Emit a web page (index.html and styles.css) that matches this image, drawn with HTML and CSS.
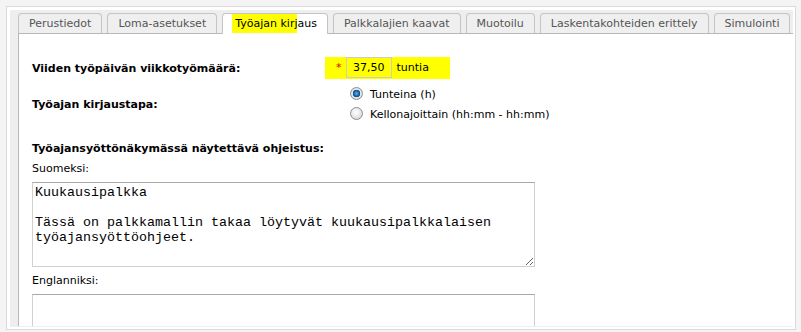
FILE: index.html
```html
<!DOCTYPE html>
<html lang="fi">
<head>
    <meta charset="UTF-8">
    <title>Palkkamalli - Työajan kirjaus</title>
    <link rel="stylesheet" href="styles.css">
</head>
<body>

<div class="frame">
    <div class="tabs">
        <ul class="tab-nav">
            <li>Perustiedot</li>
            <li>Loma-asetukset</li>
            <li class="active"><span class="mark">Työajan kirj</span>aus</li>
            <li>Palkkalajien kaavat</li>
            <li>Muotoilu</li>
            <li>Laskentakohteiden erittely</li>
            <li>Simulointi</li>
        </ul>

        <div class="panel">
            <div class="row row-hours">
                <label class="field-label" for="hours">Viiden työpäivän viikkotyömäärä:</label>
                <div class="field">
                    <span class="field-hl">
                        <span class="req">*</span>
                        <input type="text" id="hours" class="hours" value="37,50">
                        <span class="unit">tuntia</span>
                    </span>
                </div>
            </div>

            <div class="row row-mode">
                <span class="field-label">Työajan kirjaustapa:</span>
                <div class="radios">
                    <label class="radio"><input type="radio" name="mode" checked> Tunteina (h)</label>
                    <label class="radio"><input type="radio" name="mode"> Kellonajoittain (hh:mm - hh:mm)</label>
                </div>
            </div>

            <h4 class="section-title">Työajansyöttönäkymässä näytettävä ohjeistus:</h4>

            <label class="lang" for="help-fi">Suomeksi:</label>
            <textarea id="help-fi" class="help-text">Kuukausipalkka

Tässä on palkkamallin takaa löytyvät kuukausipalkkalaisen
työajansyöttöohjeet.</textarea>

            <label class="lang lang-en" for="help-en">Englanniksi:</label>
            <textarea id="help-en" class="help-text"></textarea>
        </div>
    </div>
</div>

</body>
</html>
```

FILE: styles.css
```css
body {
    margin: 0;
    background-color: #f4f4f4;
    font-family: "DejaVu Sans", Verdana, sans-serif;
    font-size: 11px;
    color: #000;
}
.frame {
    margin: 6px;
    width: 783px;
    height: 317px;
    padding: 3px 2px 2px 3px;
    border: 1px solid #dadada;
    background-color: #ffffff;
}
.tabs {
    height: 317px;
    box-sizing: border-box;
    padding-bottom: 1px;
    background-color: #eeeeee;
    display: flex;
    flex-direction: column;
}
.tab-nav {
    list-style: none;
    margin: 0;
    padding: 3px 0 0 8px;
    display: flex;
    align-items: flex-start;
    gap: 5px;
    position: relative;
    z-index: 1;
}
.tab-nav li {
    height: 19px;
    line-height: 19px;
    padding: 0 10px;
    border: 1px solid #c4c4c4;
    border-bottom: none;
    border-radius: 4px 4px 0 0;
    background-color: #efefef;
    color: #555555;
    white-space: nowrap;
}
.tab-nav li.active {
    height: 20px;
    margin-bottom: -1px;
    padding: 0 10px 0 12px;
    background-color: #ffffff;
    color: #000000;
    display: flex;
}
.tab-nav .mark {
    display: flex;
    align-items: center;
    height: 19px;
    margin-left: -3px;
    padding-left: 3px;
    background-color: #ffff00;
}
.panel {
    flex: 1;
    margin-left: 8px;
    padding: 23px 13px 0 13px;
    border-top: 1px solid #b8b8b8;
    border-left: 1px solid #b8b8b8;
    background-color: #ffffff;
    overflow: hidden;
}
.row {
    display: grid;
    grid-template-columns: 293px auto;
    align-items: center;
}
.field-label {
    font-weight: bold;
}
.field-hl {
    display: inline-flex;
    align-items: center;
    padding: 0 21px 1px 11px;
    background-color: #ffff00;
}
.req {
    color: #e00000;
    margin-right: 4px;
}
.hours {
    width: 46px;
    height: 21px;
    box-sizing: border-box;
    padding: 0 6px 0 0;
    border: 1px solid #cfcfb0;
    background: transparent;
    text-align: right;
    font-family: inherit;
    font-size: 11px;
    color: #000;
}
.unit {
    margin-left: 5px;
}
.row-mode {
    margin-top: 5px;
}
.radios {
    padding-left: 25px;
}
.radio {
    display: flex;
    align-items: center;
    height: 20px;
}
.radio input {
    appearance: none;
    -webkit-appearance: none;
    width: 13px;
    height: 13px;
    margin: -2px 7px 0 0;
    border: 1px solid #8e8e8e;
    border-radius: 50%;
    background: radial-gradient(circle at 45% 40%, #ffffff 0, #f0f0f0 35%, #c9c9c9 100%);
}
.radio input:checked {
    background: radial-gradient(circle at 50% 50%, #5fb0ea 0, #1868b0 2.5px, #0b4d8c 3.5px, #e6e6e6 4px, #cfcfcf 100%);
}
.section-title {
    margin: 18px 0 0 0;
    font-size: 11px;
    line-height: 14px;
}
.lang {
    display: block;
    margin-top: 6px;
    line-height: 14px;
}
.lang-en {
    margin-top: 7px;
}
.help-text {
    display: block;
    width: 503px;
    height: 85px;
    box-sizing: border-box;
    margin-top: 6px;
    padding: 2px;
    border: 1px solid #d0d0d0;
    border-top-color: #a8a8a8;
    font-family: "Liberation Mono", "Courier New", monospace;
    font-size: 13.333px;
    line-height: 15px;
    color: #000;
    resize: vertical;
}
```
